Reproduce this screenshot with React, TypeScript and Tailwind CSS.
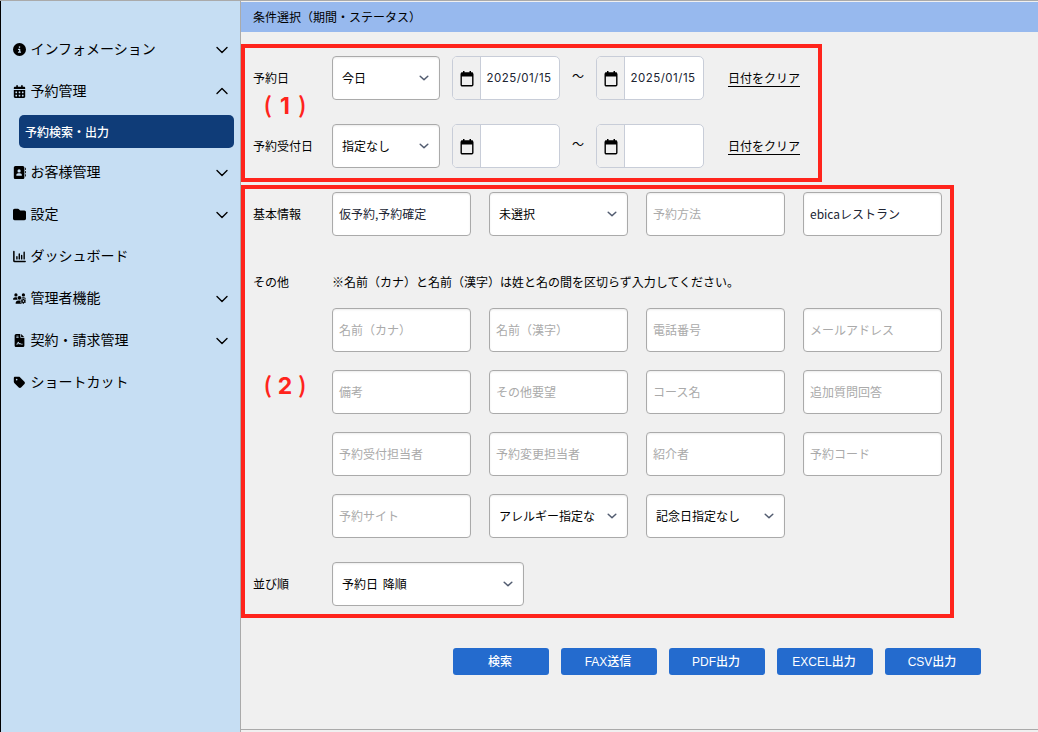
import { FaCircleInfo, FaCalendarDays, FaAddressBook, FaFolder, FaUsersGear, FaTag, FaFileContract } from "react-icons/fa6";
import type { ComponentType } from "react";
import { clsx } from "clsx";

function Chevron({ up = false, className }: { up?: boolean; className?: string }) {
  return (
    <svg viewBox="0 0 12 8" fill="none" stroke="currentColor" strokeLinecap="round" strokeLinejoin="round" className={className}>
      <path d={up ? "M1 6.5 6 1.5 11 6.5" : "M1 1.5 6 6.5 11 1.5"} strokeWidth="1.4" />
    </svg>
  );
}

function SelectArrow() {
  return (
    <svg viewBox="0 0 10 6" fill="none" stroke="#525c70" strokeWidth="1.5" strokeLinecap="round" strokeLinejoin="round" className="h-1.5 w-2.5 shrink-0">
      <path d="M1.2 1.2 5 4.8 8.8 1.2" />
    </svg>
  );
}

function ChartIcon({ className }: { className?: string }) {
  return (
    <svg viewBox="0 0 12 12" fill="none" stroke="currentColor" strokeLinecap="round" className={className}>
      <path strokeWidth="1.4" strokeLinejoin="round" d="M.8 1.3v8.6q0 .8.8.8h9.6" />
      <path strokeWidth="1.3" d="M3.6 6.2v2M5.8 3.6v4.6M8 5v3.2M10.3 2v6.2" />
    </svg>
  );
}

function MenuItem({ icon: Icon, label, chevron }: { icon: ComponentType<{ className?: string }>; label: string; chevron?: "up" | "down" }) {
  return (
    <div className="flex h-[42px] items-center pl-[11.5px] pr-3">
      <Icon className="size-[13px] shrink-0" />
      <span className="ml-[5px] flex-1 whitespace-nowrap pb-[3px] text-[14px] leading-5">{label}</span>
      {chevron && <Chevron up={chevron === "up"} className={clsx("h-2 w-3", chevron === "down" && "mt-px", chevron === "up" && "mb-px")} />}
    </div>
  );
}

function Sidebar() {
  return (
    <aside className="w-[241px] shrink-0 border-x border-l-black border-r-[#aaa] bg-[#c6def3] pt-[27px]">
      <MenuItem icon={FaCircleInfo} label="インフォメーション" chevron="down" />
      <MenuItem icon={FaCalendarDays} label="予約管理" chevron="up" />
      <div className="mb-[3px] ml-[18px] mr-1.5 mt-[3px] flex h-[33px] items-center rounded-[5px] bg-[#0f3c78] pl-1.5 text-[12px] font-medium text-white">
        予約検索・出力
      </div>
      <MenuItem icon={FaAddressBook} label="お客様管理" chevron="down" />
      <MenuItem icon={FaFolder} label="設定" chevron="down" />
      <MenuItem icon={ChartIcon} label="ダッシュボード" />
      <MenuItem icon={FaUsersGear} label="管理者機能" chevron="down" />
      <MenuItem icon={FaFileContract} label="契約・請求管理" chevron="down" />
      <MenuItem icon={FaTag} label="ショートカット" />
    </aside>
  );
}

const box = "flex h-11 items-center rounded-[4px] border border-[#aaa] bg-white whitespace-nowrap shadow-[inset_0_1px_2px_rgba(0,0,0,0.08)]";

function Select({ value, className }: { value: string; className: string }) {
  return (
    <div className={clsx(box, "pl-[9px] pr-2.5 [word-spacing:2px]", className)}>
      <span className="min-w-0 flex-1 overflow-hidden">{value}</span>
      <SelectArrow />
    </div>
  );
}

function Field({ value, placeholder }: { value?: string; placeholder?: string }) {
  return (
    <div className={clsx(box, "w-[139px] pl-1.5", value ? "text-[#202432]" : "text-[#aaa]")}>
      {value ?? placeholder}
    </div>
  );
}

function DateField({ value }: { value?: string }) {
  return (
    <div className="flex h-11 w-[108px] overflow-hidden rounded-[5px] border border-[#c8cdd8] bg-white">
      <div className="flex w-7 shrink-0 items-center justify-center border-r border-[#c8cdd8] bg-[#f0f0f0] pt-px">
        <svg viewBox="0 0 14 16" className="h-4 w-3.5">
          <path d="M3 0h1.5v2H3zM9.5 0H11v2H9.5z" />
          <rect x="1.2" y="2.2" width="11.6" height="12.6" rx="1" fill="none" stroke="currentColor" strokeWidth="1.4" />
          <path d="M1 1.5h12v4H1z" />
        </svg>
      </div>
      <span className="flex flex-1 items-center justify-center pr-0.5 pt-0.5 font-['Inter'] text-[11.5px] tracking-[0.5px] text-[#202432]">{value}</span>
    </div>
  );
}

function DateRow({ label, option, date }: { label: string; option: string; date?: string }) {
  return (
    <div className="flex h-11 items-center">
      <span className="w-[79px]">{label}</span>
      <Select value={option} className="w-[108px]" />
      <div className="ml-3 flex items-center">
        <DateField value={date} />
        <span className="w-9 pb-1 text-center">〜</span>
        <DateField value={date} />
      </div>
      <span className="ml-6 border-b border-black leading-[17px]">日付をクリア</span>
    </div>
  );
}

function Marker({ digit }: { digit: string }) {
  return (
    <div className="absolute left-[14px] flex h-6 w-[52px] items-center justify-center gap-[5px] text-[22px] font-bold leading-6 text-[#ff241c]">
      <span className="pb-1">(</span>
      <span className="inline-block w-4 pt-0.5 text-center font-['Inter'] text-[23px]">{digit}</span>
      <span className="pb-1">)</span>
    </div>
  );
}

export default function App() {
  return (
    <div className="flex h-[732px] w-[1038px] overflow-hidden border-t border-[#aaa] bg-[#f0f0f0] font-['Noto_Sans_CJK_JP',sans-serif] text-[12px] text-black">
      <Sidebar />
      <main className="flex min-w-0 flex-1 flex-col pt-px">
        <h1 className="flex h-[30px] shrink-0 items-center bg-[#97b9ee] pl-3">条件選択（期間・ステータス）</h1>

        <section className="relative mt-3 flex h-[138px] w-[581px] shrink-0 flex-col gap-6 border-4 border-[#ff241c] pl-2 pt-2">
          <DateRow label="予約日" option="今日" date="2025/01/15" />
          <div className="absolute left-0 top-[45px]"><Marker digit="1" /></div>
          <DateRow label="予約受付日" option="指定なし" />
        </section>

        <section className="relative mt-[3px] h-[433px] w-[713px] shrink-0 border-4 border-[#ff241c] pl-2 pt-[3px]">
          <div className="flex items-center">
            <span className="w-[79px]">基本情報</span>
            <div className="flex gap-[18px]">
              <Field value="仮予約,予約確定" />
              <Select value="未選択" className="w-[139px]" />
              <Field placeholder="予約方法" />
              <Field value="ebicaレストラン" />
            </div>
          </div>
          <div className="mt-9 flex h-5 items-center">
            <span className="w-[79px]">その他</span>
            <span>※名前（カナ）と名前（漢字）は姓と名の間を区切らず入力してください。</span>
          </div>
          <div className="absolute left-0 top-[184px]"><Marker digit="2" /></div>
          <div className="ml-[79px] mt-4 grid w-[610px] grid-cols-4 gap-[18px]">
            <Field placeholder="名前（カナ）" />
            <Field placeholder="名前（漢字）" />
            <Field placeholder="電話番号" />
            <Field placeholder="メールアドレス" />
            <Field placeholder="備考" />
            <Field placeholder="その他要望" />
            <Field placeholder="コース名" />
            <Field placeholder="追加質問回答" />
            <Field placeholder="予約受付担当者" />
            <Field placeholder="予約変更担当者" />
            <Field placeholder="紹介者" />
            <Field placeholder="予約コード" />
            <Field placeholder="予約サイト" />
            <Select value="アレルギー指定な" className="w-[139px]" />
            <Select value="記念日指定なし" className="w-[139px]" />
          </div>
          <div className="mt-6 flex items-center">
            <span className="w-[79px]">並び順</span>
            <Select value="予約日 降順" className="w-[192px]" />
          </div>
        </section>

        <div className="ml-[212px] mt-[30px] flex gap-3">
          {["検索", "FAX送信", "PDF出力", "EXCEL出力", "CSV出力"].map((label) => (
            <button key={label} className="flex h-[27px] w-24 items-center justify-center rounded-[3px] bg-[#246bce] pr-0.5 font-['Liberation_Sans','Noto_Sans_CJK_JP',sans-serif] font-medium text-white">
              {label}
            </button>
          ))}
        </div>
        <div className="mb-0.5 mt-auto h-px shrink-0 bg-[#aaa]" />
      </main>
    </div>
  );
}
